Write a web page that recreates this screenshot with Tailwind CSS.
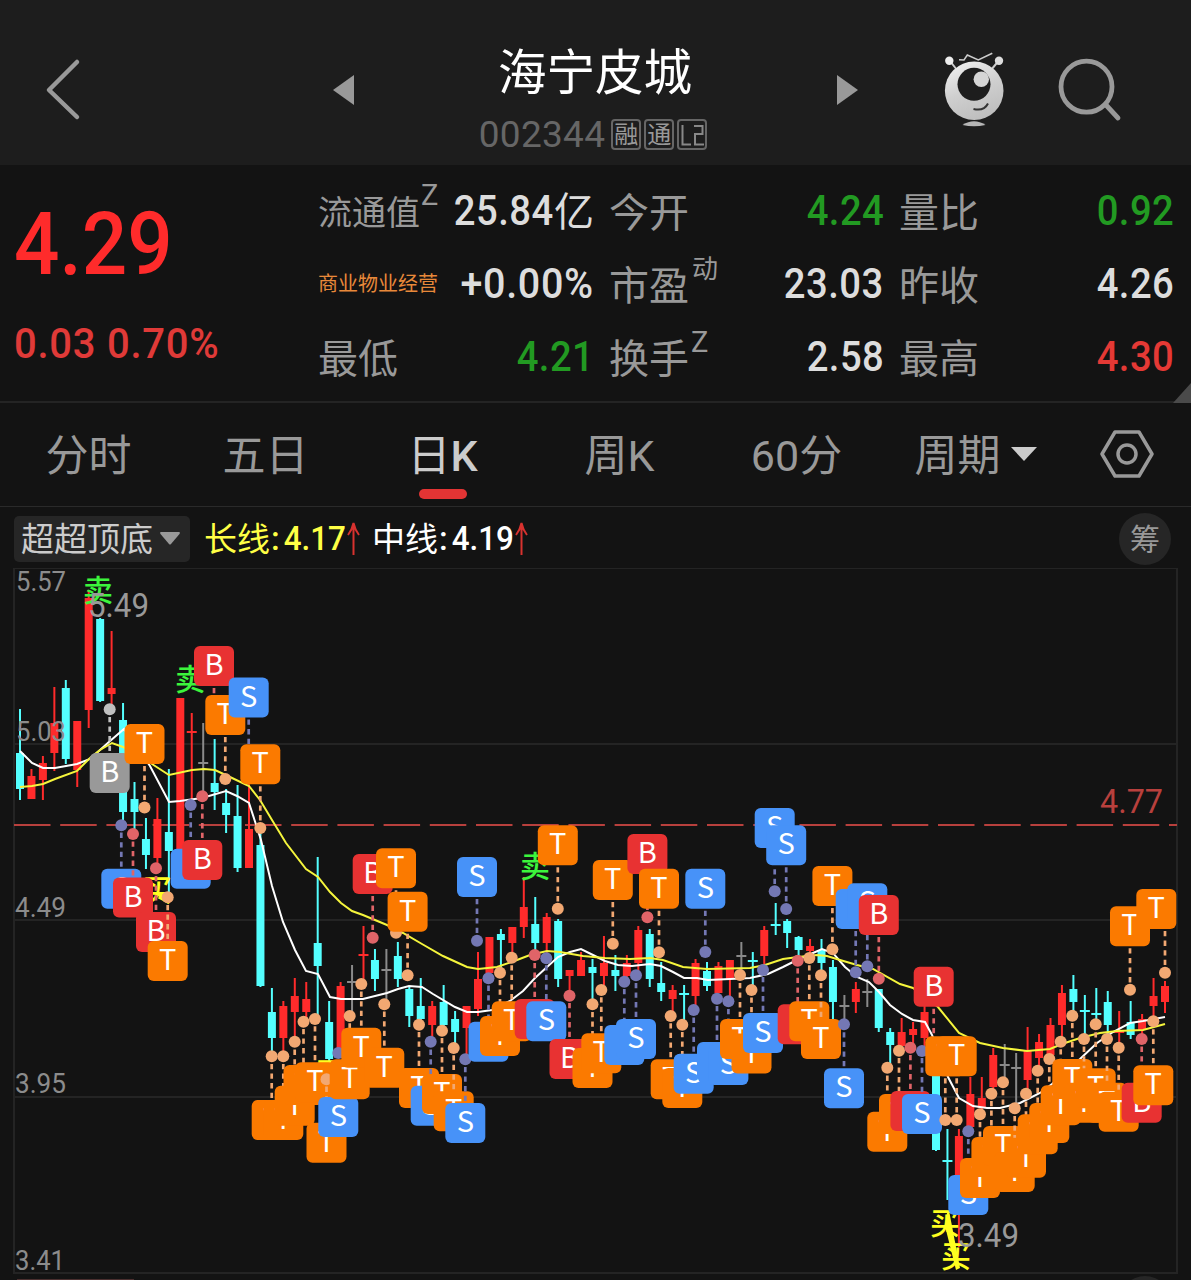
<!DOCTYPE html>
<html lang="zh-CN">

<head>
  <meta charset="UTF-8">
  <meta name="viewport" content="width=device-width, initial-scale=1.0">
  <title>海宁皮城 002344</title>
  <script src="https://cdn.jsdelivr.net/npm/@tailwindcss/browser@4"></script>
</head>

<body class="w-[1191px] h-[1280px] overflow-hidden bg-[#131313] text-[#999] font-['Roboto','Noto_Sans_CJK_SC',sans-serif]">
  <!-- Header -->
  <header class="h-[165px] bg-[#1d1d1d] flex items-start">
    <svg class="ml-[44px] mt-[56px] w-10 h-[68px] shrink-0" viewBox="0 0 40 68" fill="none" stroke="#999" stroke-width="4.5" stroke-linecap="round" stroke-linejoin="round">
      <path d="M33 6 L5 34 L33 61" />
    </svg>
    <svg class="ml-[249px] mt-[74px] w-[22px] h-8 shrink-0" viewBox="0 0 22 32" fill="#999">
      <path d="M0 16 L21 1 V31 Z" />
    </svg>
    <div class="ml-[105px] w-[270px] shrink-0 flex flex-col items-center">
      <h1 class="mt-[42px] h-16 leading-[64px] text-[48.5px] text-white">海宁皮城</h1>
      <div class="mt-[8px] h-[40px] flex items-center gap-[3px] -ml-1">
        <span class="text-[37px] leading-[40px] pt-[2px] text-[#666] mr-[3px] tracking-[0.3px]">002344</span>
        <span class="w-[30px] h-[31px] border-2 border-[#666] rounded-[4px] text-[24px] leading-[29px] flex justify-center">融</span>
        <span class="w-[30px] h-[31px] border-2 border-[#666] rounded-[4px] text-[24px] leading-[29px] flex justify-center">通</span>
        <svg class="w-[30px] h-[31px]" viewBox="0 0 30 31" fill="none" stroke="#888" stroke-width="2">
          <rect x="1" y="1" width="28" height="29" rx="3" stroke="#666" />
          <path d="M5.500 6 V25.500 H14 M17 7 H25.500 V15 H18 V25.500 H27" />
        </svg>
      </div>
    </div>
    <svg class="ml-[107px] mt-[74px] w-[22px] h-8 shrink-0" viewBox="0 0 22 32" fill="#999">
      <path d="M21 16 L0 1 V31 Z" />
    </svg>
    <svg class="ml-[81px] mt-[50px] w-[68px] h-20 shrink-0" viewBox="940 50 68 80">
      <defs>
        <linearGradient id="head" x1="0.2" y1="0" x2="0.6" y2="1">
          <stop offset="0" stop-color="#f0f0f0" />
          <stop offset="0.5" stop-color="#cfcfcf" />
          <stop offset="1" stop-color="#bdbdbd" />
        </linearGradient>
      </defs>
      <g fill="none" stroke="#ccc" stroke-width="1.500">
        <path d="M950 61 L957 70 M998.500 61 L991 70" stroke-width="2" />
        <path d="M959 59.700 L964 60 L967.300 55 L978.300 60 L992.300 53.300" />
      </g>
      <circle cx="949.300" cy="60.700" r="4.200" fill="#eee" />
      <circle cx="999" cy="60.700" r="4.200" fill="#ddd" />
      <circle cx="974.200" cy="90.700" r="29.300" fill="url(#head)" />
      <circle cx="974" cy="84.300" r="16.500" fill="#1d1d1d" />
      <circle cx="981.300" cy="79.300" r="7.700" fill="#d5d5d5" />
      <path d="M973.500 109 Q984 111.500 988 103.500" fill="none" stroke="#333" stroke-width="2" />
      <path d="M962.500 125 Q974 117.500 985.500 125 Q974 127.500 962.500 125 Z" fill="#b5b5b5" />
    </svg>
    <svg class="ml-[48px] mt-[56px] w-[68px] h-[68px] shrink-0" viewBox="1056 56 68 68" fill="none" stroke="#999" stroke-width="4.800" stroke-linecap="round">
      <circle cx="1086.500" cy="86.700" r="25.500" />
      <path d="M1106 105 L1118 118" />
    </svg>
  </header>

  <!-- Quote -->
  <section class="h-[238px] border-b-2 border-[#242424] flex relative">
    <div class="w-[304px] pl-[14px] shrink-0">
      <div class="mt-[29px] h-[100px] leading-[100px] text-[87px] font-medium text-[#ff2b2b] origin-left scale-x-[0.92] whitespace-nowrap">4.29</div>
      <div class="mt-[24px] h-[50px] leading-[50px] text-[43px] font-medium text-[#e03a38] origin-left scale-x-[0.93] whitespace-nowrap tracking-[0.8px]">0.03 0.70%</div>
    </div>
    <div class="ml-[14px] pt-[9px] grid grid-cols-[276px_275px_275px] gap-x-[15px] auto-rows-[73px] text-[40px] leading-[73px] whitespace-nowrap">
      <div class="flex justify-between"><span class="flex pt-[3px] text-[34px]">流通值<i class="not-italic pl-[1px] text-[29px] leading-[37px]">Z</i></span><b class="flex font-medium text-[#ddd]"><span class="text-[42px] origin-right scale-x-[0.91] tracking-[0.5px]">25.84</span><span class="font-normal pt-[2px]">亿</span></b></div>
      <div class="flex justify-between"><span class="pt-[3px]">今开</span><b class="font-medium text-[42px] text-[#229a22] origin-right scale-x-[0.91] tracking-[0.5px]">4.24</b></div>
      <div class="flex justify-between"><span class="pt-[3px]">量比</span><b class="font-medium text-[42px] text-[#229a22] origin-right scale-x-[0.91] tracking-[0.5px]">0.92</b></div>
      <div class="flex justify-between"><span class="text-[20px] pt-[1px] text-[#e8893a]">商业物业经营</span><b class="font-medium text-[42px] text-[#ddd] origin-right scale-x-[0.94] tracking-[0.7px]">+0.00%</b></div>
      <div class="flex justify-between"><span class="flex pt-[3px]">市盈<i class="not-italic ml-[3px] text-[26px] leading-[38px]">动</i></span><b class="font-medium text-[42px] text-[#ddd] origin-right scale-x-[0.91] tracking-[0.5px]">23.03</b></div>
      <div class="flex justify-between"><span class="pt-[3px]">昨收</span><b class="font-medium text-[42px] text-[#ddd] origin-right scale-x-[0.91] tracking-[0.5px]">4.26</b></div>
      <div class="flex justify-between"><span class="pt-[3px]">最低</span><b class="font-medium text-[42px] text-[#229a22] origin-right scale-x-[0.91] tracking-[0.5px]">4.21</b></div>
      <div class="flex justify-between"><span class="flex pt-[3px]">换手<i class="not-italic ml-[2px] text-[29px] leading-[38px]">Z</i></span><b class="font-medium text-[42px] text-[#ddd] origin-right scale-x-[0.91] tracking-[0.5px]">2.58</b></div>
      <div class="flex justify-between"><span class="pt-[3px]">最高</span><b class="font-medium text-[42px] text-[#e53935] origin-right scale-x-[0.91] tracking-[0.5px]">4.30</b></div>
    </div>
    <svg class="absolute right-0 bottom-[-2px] w-[18px] h-5" viewBox="0 0 18 20"><path d="M18 0 V20 H0 Z" fill="#4a4a4a" /></svg>
  </section>

  <!-- Period tabs -->
  <nav class="h-[104px] border-b border-[#2a2a2a] grid grid-cols-[repeat(6,177px)_129px] text-[43px] leading-[106px] text-center whitespace-nowrap">
    <span>分时</span>
    <span>五日</span>
    <span class="relative text-[#ccc]">日<b class="font-medium">K</b><i class="absolute left-[65px] top-[86px] w-12 h-[10px] rounded-full bg-[#e23434]"></i></span>
    <span>周K</span>
    <span>60分</span>
    <span class="flex items-center justify-center gap-[10px] pl-[4px]">周期<svg class="w-[26px] h-[14px] -mt-1" viewBox="0 0 26 14"><path d="M0 0 H26 L13 14 Z" fill="#ccc" /></svg></span>
    <span class="flex items-center justify-center">
      <svg class="w-[54px] h-[50px] -mt-1" viewBox="0 0 54 50" fill="none" stroke="#999" stroke-width="3.500" stroke-linejoin="round">
        <path d="M15 3 H39 L52 25 L39 47 H15 L2 25 Z" />
        <circle cx="27" cy="25" r="9" />
      </svg>
    </span>
  </nav>

  <!-- Indicator row -->
  <div class="h-[61px] pl-[14px] pr-5 flex items-center text-[33px] leading-[52px] whitespace-nowrap">
    <div class="w-[176px] h-[46px] mt-[2px] pl-[7px] rounded-[5px] bg-[#262626] text-[#ccc] flex items-center gap-[7px]"><span class="pt-[3px]">超超顶底</span><svg class="w-5 h-[13px]" viewBox="0 0 20 13"><path d="M1 0 H19 Q20.500 0 19.500 2 L11 12 Q10 13 9 12 L0.500 2 Q-0.500 0 1 0 Z" fill="#999" /></svg></div>
    <div class="ml-[14px] w-[154px] flex items-center text-[#ffff45]"><span class="pt-[5px]">长线</span><span class="w-[9px] pt-[3px] pl-[1px] font-medium">:</span><span class="w-[68px] pl-[5px] pt-[3px] font-medium origin-left scale-x-[0.95]">4.17</span><svg class="w-[13px] h-[34px] shrink-0" viewBox="0 0 13 34" fill="none" stroke="#d8322f" stroke-width="2"><path d="M6.500 34 V2 M1 14 Q5 9 6.500 2 Q8 9 12 14" /></svg></div>
    <div class="ml-[14px] w-[154px] flex items-center text-white"><span class="pt-[5px]">中线</span><span class="w-[9px] pt-[3px] pl-[1px] font-medium">:</span><span class="w-[68px] pl-[5px] pt-[3px] font-medium origin-left scale-x-[0.95]">4.19</span><svg class="w-[13px] h-[34px] shrink-0" viewBox="0 0 13 34" fill="none" stroke="#d8322f" stroke-width="2"><path d="M6.500 34 V2 M1 14 Q5 9 6.500 2 Q8 9 12 14" /></svg></div>
    <div class="ml-auto w-[52px] h-[52px] mt-[2px] rounded-full bg-[#262626] text-[30px] leading-[54px] text-center">筹</div>
  </div>

  <!-- K line chart -->
  <svg id="chart" class="block w-[1191px] h-[712px]" viewBox="0 568 1191 712"></svg>

  <script>
    // [colour, high, low, open/close top, open/close bottom]
    const candles = [
      ['c', 709, 800, 753, 789], ['r', 769, 799, 776, 799], ['r', 756, 800, 763, 780], ['r', 687, 771, 723, 753],
      ['c', 680, 764, 688, 759], ['r', 721, 787, 721, 770], ['r', 590, 728, 598, 710], ['c', 618, 702, 619, 701],
      ['r', 631, 705, 688, 694], ['c', 703, 822, 720, 812], ['c', 782, 833, 799, 812], ['c', 818, 869, 839, 855],
      ['r', 798, 865, 819, 858], ['c', 769, 897, 832, 851], ['r', 698, 850, 698, 850], ['r', 713, 803, 731, 733],
      ['g', 723, 795, 762, 764], ['c', 739, 810, 783, 792], ['c', 789, 833, 803, 815], ['c', 785, 872, 816, 868],
      ['r', 783, 868, 829, 868], ['c', 830, 987, 845, 986], ['c', 988, 1053, 1012, 1038], ['r', 1001, 1053, 1006, 1038],
      ['r', 978, 1038, 996, 1012], ['r', 982, 1019, 999, 1012], ['c', 857, 1015, 943, 966], ['c', 1001, 1061, 1022, 1059],
      ['r', 982, 1050, 986, 1050], ['g', 965, 1012, 981, 983], ['r', 926, 980, 954, 956], ['c', 949, 991, 960, 979],
      ['g', 949, 1000, 969, 971], ['c', 942, 987, 956, 979], ['c', 986, 1027, 989, 1016], ['c', 978, 1020, 1006, 1019],
      ['r', 1001, 1038, 1006, 1025], ['c', 985, 1027, 1002, 1025], ['c', 1011, 1043, 1019, 1032], ['r', 1006, 1055, 1006, 1028],
      ['r', 952, 1016, 979, 1009], ['r', 937, 973, 937, 973], ['c', 929, 968, 934, 940], ['r', 927, 953, 927, 943],
      ['r', 877, 938, 907, 927], ['c', 897, 952, 924, 943], ['r', 913, 955, 917, 943], ['c', 919, 987, 921, 979],
      ['r', 970, 993, 970, 976], ['r', 952, 976, 960, 976], ['c', 959, 1002, 967, 973], ['r', 936, 985, 963, 976],
      ['c', 955, 991, 970, 976], ['r', 955, 978, 963, 976], ['r', 926, 973, 930, 963], ['c', 929, 987, 934, 979],
      ['c', 962, 1001, 983, 992], ['r', 985, 1013, 990, 999], ['c', 985, 1021, 993, 995], ['r', 959, 1008, 963, 996],
      ['c', 962, 991, 971, 986], ['r', 962, 993, 966, 993], ['r', 960, 998, 960, 979], ['g', 942, 973, 955, 957],
      ['c', 952, 987, 960, 962], ['r', 926, 967, 930, 956], ['c', 903, 935, 924, 926], ['c', 919, 948, 921, 933],
      ['c', 936, 957, 937, 950], ['r', 939, 955, 946, 951], ['c', 939, 972, 950, 963], ['c', 960, 1019, 967, 1002],
      ['g', 995, 1020, 1005, 1007], ['r', 982, 1013, 989, 1002], ['g', 979, 1007, 991, 993], ['c', 989, 1032, 989, 1028],
      ['c', 1028, 1063, 1032, 1045], ['r', 1018, 1047, 1032, 1046], ['r', 1022, 1043, 1029, 1035], ['r', 1005, 1046, 1012, 1038],
      ['c', 1060, 1151, 1060, 1150], ['c', 1129, 1200, 1160, 1162], ['r', 1129, 1247, 1136, 1175], ['r', 1077, 1127, 1094, 1127],
      ['r', 1077, 1113, 1098, 1108], ['r', 1048, 1093, 1055, 1087], ['g', 1044, 1078, 1064, 1066], ['g', 1053, 1105, 1067, 1069],
      ['r', 1027, 1090, 1051, 1080], ['r', 1034, 1066, 1042, 1058], ['r', 1018, 1057, 1025, 1055], ['r', 985, 1038, 993, 1025],
      ['c', 975, 1012, 989, 1002], ['c', 995, 1035, 1010, 1012], ['c', 988, 1020, 1013, 1015], ['c', 991, 1035, 1002, 1025],
      ['r', 1011, 1043, 1031, 1033], ['c', 1001, 1039, 1022, 1035], ['r', 1014, 1035, 1019, 1030], ['r', 978, 1017, 996, 1006],
      ['r', 981, 1013, 986, 1002]
    ];

    // [type, x, dot y, label centre y, label x if it differs]
    const marks = [
      ['G', 109.7, 709.3, 773], ['S', 121.3, 825.3, 888.7], ['B', 133, 834, 897.5], ['T', 144.5, 807.5, 744],
      ['B', 156, 868.3, 932], ['T', 167.7, 897.3, 961], ['S', 190.7, 805, 868.7], ['B', 202.3, 796.3, 860],
      ['B', 214, 722, 666], ['T', 225.3, 779, 715], ['S', 248.7, 761, 697.5], ['T', 260.3, 828, 764.3],
      ['T', 271.7, 1056.3, 1120], ['T', 283.3, 1056.3, 1120], ['T', 294.7, 1041.7, 1105.7], ['T', 303.5, 1021.7, 1085],
      ['T', 315, 1019, 1082.3], ['T', 326.5, 1079.3, 1142.7], ['S', 338.3, 1053, 1117], ['T', 349.7, 1016, 1079.3],
      ['T', 361.3, 984, 1047.7], ['B', 372.7, 937.7, 874], ['T', 384.3, 1004.3, 1067.7], ['T', 396, 932.7, 868.3],
      ['T', 407.6, 975.3, 911.7], ['T', 419, 1024.7, 1088], ['S', 430.7, 1041.7, 1105.7], ['T', 442, 1030.7, 1094],
      ['T', 453.7, 1048, 1111.3], ['S', 465.3, 1059.3, 1123], ['S', 477, 940.7, 877], ['S', 488.5, 978.3, 1041.7],
      ['T', 500, 972.7, 1036], ['T', 511.7, 957.7, 1021.3], ['B', 534.7, 955, 1019], ['S', 546.3, 958.3, 1021.3],
      ['T', 557.8, 908.7, 845.3], ['B', 569.5, 995.7, 1059], ['T', 592.5, 1004.3, 1068], ['T', 601.3, 990, 1053.3],
      ['T', 612.8, 943.7, 880], ['S', 624.3, 981.7, 1045], ['S', 636, 975.3, 1039], ['B', 647.4, 917.3, 854],
      ['T', 659, 952.3, 888.7], ['T', 670.7, 1016, 1079.3], ['T', 682.3, 1024.7, 1088], ['S', 693.7, 1010, 1073.7],
      ['S', 705.3, 952, 888.7], ['S', 717, 998.7, 1062], ['S', 728.4, 1001.3, 1065], ['T', 740, 975, 1039],
      ['T', 751.5, 990, 1053.5], ['S', 763, 970, 1033], ['S', 774.7, 891.3, 828], ['S', 786.2, 909, 845.3],
      ['B', 797.7, 960.7, 1024.3], ['T', 809.3, 958, 1021.3], ['T', 821, 975.3, 1039], ['T', 832.4, 949.3, 886],
      ['S', 844, 1024.3, 1088.3], ['S', 855.7, 972.3, 909], ['S', 867.3, 966.3, 903.3], ['B', 878.8, 978.7, 915],
      ['T', 887.3, 1067.7, 1131.7], ['T', 899, 1050.7, 1114], ['B', 910.4, 1047.7, 1111], ['S', 922, 1051, 1114],
      ['B', 933.7, 1050, 986.7], ['T', 945.3, 1120, 1056.3], ['T', 956.7, 1120, 1056.3], ['S', 968.3, 1131.3, 1195],
      ['T', 980, 1114.3, 1178], ['T', 991.4, 1093.7, 1157], ['T', 1003, 1082.3, 1146], ['T', 1014.7, 1108.3, 1172],
      ['T', 1026, 1093.7, 1157.7], ['T', 1037.7, 1070.7, 1134.3], ['T', 1049.3, 1059, 1123], ['T', 1060.7, 1041.7, 1105.3],
      ['T', 1072.3, 1015.7, 1079], ['T', 1084, 1039, 1102.7], ['T', 1095.7, 1024.3, 1088.3], ['T', 1107, 1039, 1102.7],
      ['T', 1118.7, 1047.7, 1111.7], ['T', 1130, 989.7, 926.3], ['B', 1141.7, 1039, 1102.7], ['T', 1153.3, 1021.3, 1085.3],
      ['T', 1165, 972.7, 909, 1156.3]
    ];

    const midLine = '20,751 32,763 43,768 55,768 66,766 77,764 90,759 110,741 124,729 150,766 169,802 180,801 202,798 226,791 237,796 249,803 261,840 272,886 283,922 295,950 306,971 318,974 330,997 341,999 363,999 387,993 398,989 409,986 422,987 433,994 455,1007 467,1012 478,1012 492,1010 510,1001 523,991 535,978 547,967 558,957 570,952 581,949 593,955 605,961 618,965 632,966 650,964 661,966 673,972 684,978 697,978 708,980 730,979 750,978 768,974 783,967 797,960 813,953 822,949 833,953 845,967 857,977 869,982 879,992 890,1005 902,1014 913,1020 925,1022 932,1035 948,1077 959,1098 973,1106 987,1108 1000,1108 1020,1103 1040,1093 1052,1084 1080,1059 1097,1043 1113,1032 1130,1023 1143,1021 1165,1017';
    const longLine = '20,787 32,786 43,784 55,779 77,771 90,758 100,750 112,743 123,747 152,764 169,775 192,770 204,769 215,770 230,777 249,786 260,800 272,820 286,843 306,869 318,877 330,892 341,903 352,911 363,915 387,925 403,933 422,944 443,956 467,967 478,969 497,967 517,960 530,955 547,951 560,952 583,956 605,958 630,959 650,958 663,960 683,967 707,969 750,968 765,965 783,959 798,957 817,955 827,956 840,960 857,965 873,969 900,984 913,988 938,1007 959,1033 980,1043 1003,1048 1027,1051 1050,1049 1062,1044 1080,1038 1100,1033 1117,1031 1143,1030 1165,1024';

    const colors = { r: '#ff2b2b', c: '#54ffff', g: '#8a8a8a' };
    const box = { B: '#e83232', S: '#4792f8', T: '#fb7a00', G: '#999999' };
    const dot = { B: '#e06468', S: '#7478b4', T: '#f2a872', G: '#c0c0c0' };

    const line = (x1, y1, x2, y2, c, w, rest = '') =>
      `<line x1="${x1}" y1="${y1}" x2="${x2}" y2="${y2}" stroke="${c}" stroke-width="${w}" ${rest}/>`;
    const label = (t, x, y, size, c, len) =>
      `<text x="${x}" y="${y}" font-size="${size}" fill="${c}" ${len ? `textLength="${len}" lengthAdjust="spacingAndGlyphs"` : 'font-weight="500"'}>${t}</text>`;

    let out = '<rect x="14" y="568" width="1163" height="705" fill="none" stroke="#242424" stroke-width="2"/>';
    for (const y of [744, 920, 1097]) out += line(14, y, 1177, y, '#242424', 2);
    out += line(14, 825, 1177, 825, '#b8403d', 2, 'stroke-dasharray="36.5 9.700"');

    candles.forEach(([c, high, low, top, bottom], i) => {
      const x = 20 + i * 11.45;
      const w = bottom - top < 3 ? 10 : 8;
      out += line(x, high, x, low, colors[c], 2);
      out += `<rect x="${x - w / 2}" y="${top}" width="${w}" height="${bottom - top}" fill="${colors[c]}"/>`;
    });

    out += `<polyline points="${midLine}" fill="none" stroke="#fff" stroke-width="2"/>`;
    out += `<polyline points="${longLine}" fill="none" stroke="#f5f53c" stroke-width="2"/>`;

    out += label('卖', 83, 601, 30, '#3cf53c') + label('卖', 175, 690, 30, '#3cf53c') + label('卖', 520, 877, 30, '#3cf53c');
    for (const [x, y] of [[142, 901], [315, 1084], [930, 1234], [941, 1267]]) out += label('买', x, y, 30, '#ffff20');
    out += '<path d="M947 1213 L949.500 1213 L960 1268 L956 1270 L945 1226 Z" fill="#ffff20"/>' + line(157, 893, 168, 901, '#ffff20', 4);

    out += label('5.57', 16, 591, 27, '#8c8c8c', 50) + label('5.03', 16, 741, 27, '#8c8c8c', 50);
    out += label('4.49', 15, 917, 27, '#8c8c8c', 51) + label('3.95', 15, 1093, 27, '#8c8c8c', 51);
    out += label('3.41', 15, 1270, 27, '#8c8c8c', 50);
    out += label('5.49', 88, 617, 33, '#999', 61) + label('3.49', 958, 1247, 33, '#999', 61);
    out += label('4.77', 1100, 813, 33, '#b8403d', 63);

    for (const [t, x, y, cy, bx = x] of marks) {
      const d = cy > y ? 1 : -1;
      out += line(x, cy - d * 22, x, y, dot[t], 2.7, 'stroke-dasharray="5.300 4.300"');
      out += `<circle cx="${x}" cy="${y}" r="6" fill="${dot[t]}"/>`;
      out += `<rect x="${bx - 20}" y="${cy - 20}" width="40" height="40" rx="6" fill="${box[t]}"/>`;
      out += `<text x="${bx}" y="${cy + 9}" font-size="29" font-family="Noto Sans CJK SC" fill="#fff" text-anchor="middle">${t === 'G' ? 'B' : t}</text>`;
    }

    // Top edge of the next panel
    out += line(17, 1279.5, 134, 1279.5, '#4a2f2f', 1) + '<circle cx="1145" cy="1302" r="26" fill="#262626"/>';
    document.getElementById('chart').innerHTML = out;
  </script>
</body>

</html>
